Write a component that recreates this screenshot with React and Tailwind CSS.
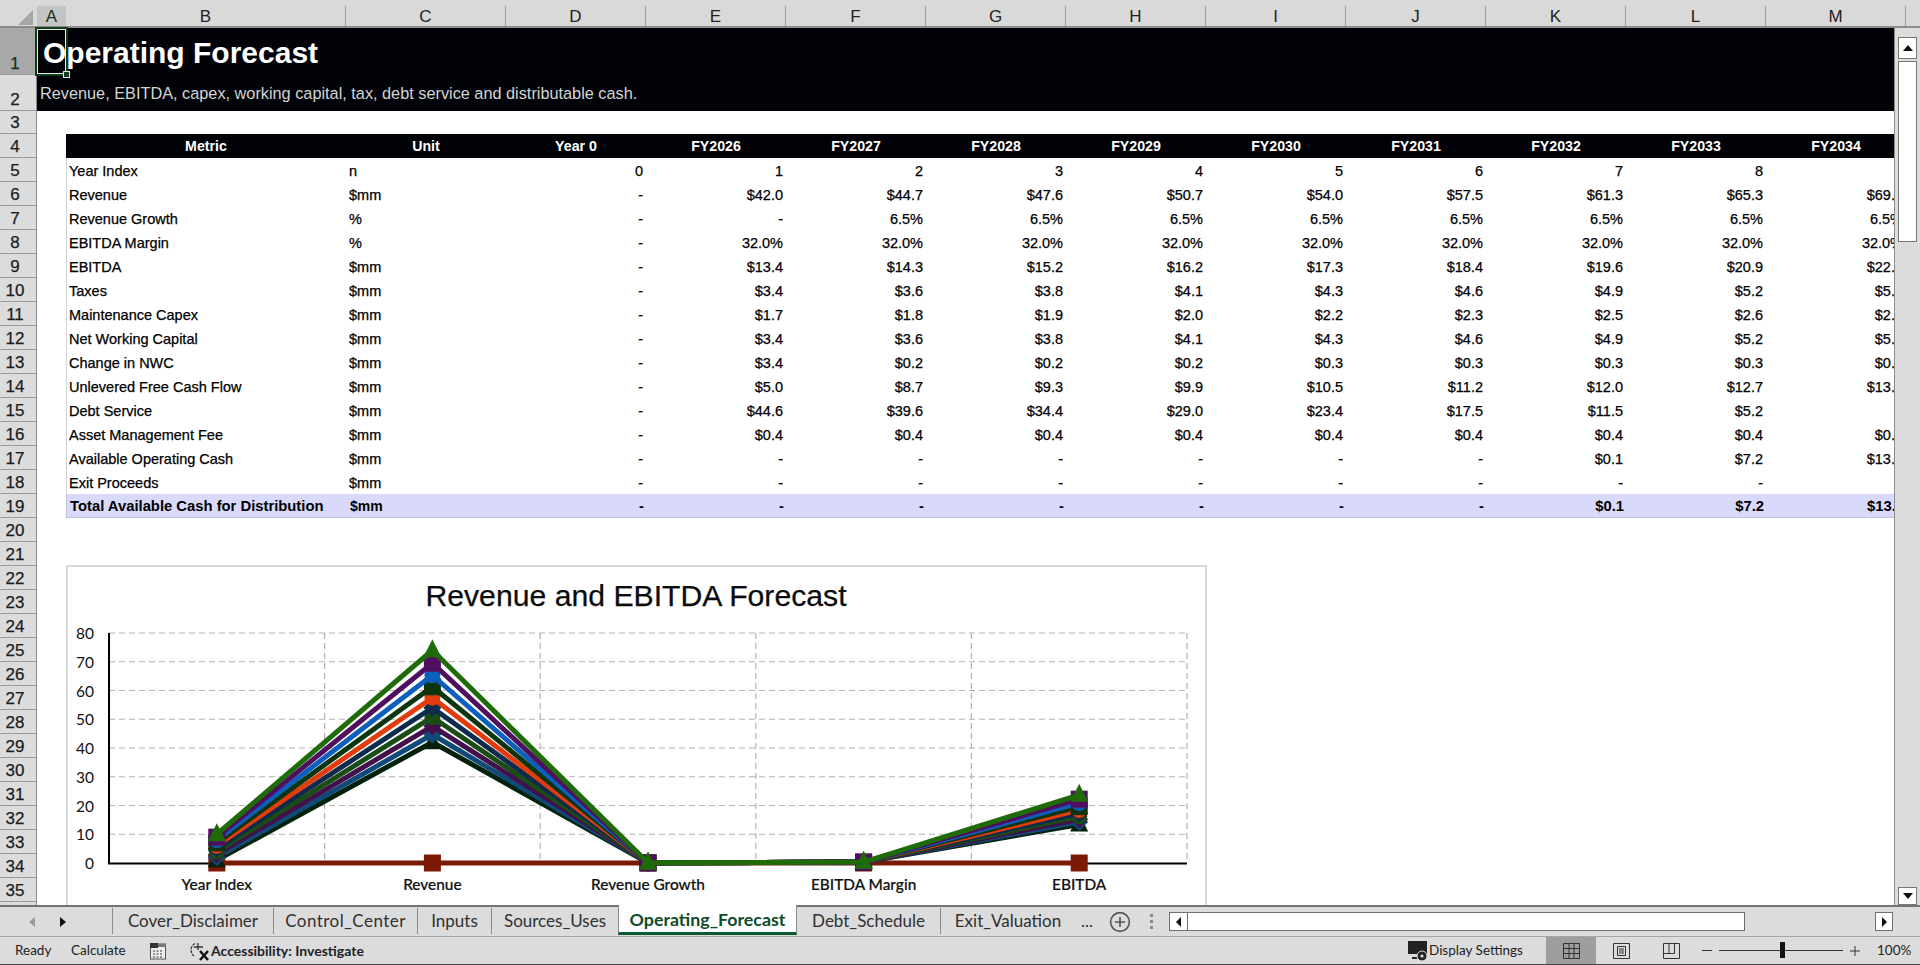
import { Fragment } from "react";

const cols = ["D", "E", "F", "G", "H", "I", "J", "K", "L", "M"];

const rows = [
  ["Year Index", "n", ["0", "1", "2", "3", "4", "5", "6", "7", "8", "9"]],
  ["Revenue", "$mm", ["-", "$42.0", "$44.7", "$47.6", "$50.7", "$54.0", "$57.5", "$61.3", "$65.3", "$69.5"]],
  ["Revenue Growth", "%", ["-", "-", "6.5%", "6.5%", "6.5%", "6.5%", "6.5%", "6.5%", "6.5%", "6.5%"]],
  ["EBITDA Margin", "%", ["-", "32.0%", "32.0%", "32.0%", "32.0%", "32.0%", "32.0%", "32.0%", "32.0%", "32.0%"]],
  ["EBITDA", "$mm", ["-", "$13.4", "$14.3", "$15.2", "$16.2", "$17.3", "$18.4", "$19.6", "$20.9", "$22.2"]],
  ["Taxes", "$mm", ["-", "$3.4", "$3.6", "$3.8", "$4.1", "$4.3", "$4.6", "$4.9", "$5.2", "$5.6"]],
  ["Maintenance Capex", "$mm", ["-", "$1.7", "$1.8", "$1.9", "$2.0", "$2.2", "$2.3", "$2.5", "$2.6", "$2.8"]],
  ["Net Working Capital", "$mm", ["-", "$3.4", "$3.6", "$3.8", "$4.1", "$4.3", "$4.6", "$4.9", "$5.2", "$5.6"]],
  ["Change in NWC", "$mm", ["-", "$3.4", "$0.2", "$0.2", "$0.2", "$0.3", "$0.3", "$0.3", "$0.3", "$0.3"]],
  ["Unlevered Free Cash Flow", "$mm", ["-", "$5.0", "$8.7", "$9.3", "$9.9", "$10.5", "$11.2", "$12.0", "$12.7", "$13.6"]],
  ["Debt Service", "$mm", ["-", "$44.6", "$39.6", "$34.4", "$29.0", "$23.4", "$17.5", "$11.5", "$5.2", ""]],
  ["Asset Management Fee", "$mm", ["-", "$0.4", "$0.4", "$0.4", "$0.4", "$0.4", "$0.4", "$0.4", "$0.4", "$0.4"]],
  ["Available Operating Cash", "$mm", ["-", "-", "-", "-", "-", "-", "-", "$0.1", "$7.2", "$13.2"]],
  ["Exit Proceeds", "$mm", ["-", "-", "-", "-", "-", "-", "-", "-", "-", ""]],
];

const years = ["Year 0", "FY2026", "FY2027", "FY2028", "FY2029", "FY2030", "FY2031", "FY2032", "FY2033", "FY2034"];
const totals = ["-", "-", "-", "-", "-", "-", "-", "$0.1", "$7.2", "$13.2"];

// chart uses page coordinates through the viewBox
const catX = [216.8, 432.4, 648, 863.6, 1079.2];
const yOf = (v) => 863 - v * 2.875;
const series = [
  { color: "#7a1a05", marker: "square", values: [0, 0, 0, 0, 0] },
  { color: "#04220b", marker: "triangle", values: [1, 42, 0.065, 0.32, 13.4] },
  { color: "#0f4a78", marker: "diamond", values: [2, 44.7, 0.065, 0.32, 14.3] },
  { color: "#42104a", marker: "diamond", values: [3, 47.6, 0.065, 0.32, 15.2] },
  { color: "#1a4d15", marker: "circle", values: [4, 50.7, 0.065, 0.32, 16.2] },
  { color: "#0e2a4c", marker: "diamond", values: [5, 54, 0.065, 0.32, 17.3] },
  { color: "#e23c0e", marker: "circle", values: [6, 57.5, 0.065, 0.32, 18.4] },
  { color: "#0c3510", marker: "square", values: [7, 61.3, 0.065, 0.32, 19.6] },
  { color: "#0d5fbd", marker: "circle", values: [8, 65.3, 0.065, 0.32, 20.9] },
  { color: "#4f0f5e", marker: "square", values: [9, 69.5, 0.065, 0.32, 22.2] },
  { color: "#1f6b0a", marker: "triangle", values: [10, 74, 0.065, 0.32, 23.7] },
];

function Marker({ kind, x, y, color }) {
  if (kind === "square") return <rect x={x - 8.5} y={y - 8.5} width="17" height="17" fill={color} />;
  if (kind === "circle") return <circle cx={x} cy={y} r="8" fill={color} />;
  if (kind === "diamond") return <path d={`M${x} ${y - 9}L${x + 9} ${y}L${x} ${y + 9}L${x - 9} ${y}Z`} fill={color} />;
  return <path d={`M${x} ${y - 11}L${x + 9} ${y + 7}L${x - 9} ${y + 7}Z`} fill={color} />;
}

function Chart() {
  const ticks = [80, 70, 60, 50, 40, 30, 20, 10, 0];
  const names = ["Year Index", "Revenue", "Revenue Growth", "EBITDA Margin", "EBITDA"];
  const gridX = [324.6, 540.2, 755.8, 971.4, 1187];
  return (
    <div className="ml-[29px] w-[1141px] h-[420px] border-2 border-[#d9d9d9] bg-white shrink-0">
      <svg viewBox="68 567 1137 416" width="1137" height="416" className="block">
        <text x="636" y="606" textAnchor="middle" fontFamily="'Liberation Sans', sans-serif" fontSize="30.2" fill="#0c0c0c" stroke="#0c0c0c" strokeWidth="0.25">
          Revenue and EBITDA Forecast
        </text>
        {ticks.slice(0, 8).map((t) => (
          <line key={t} x1="109" x2="1187" y1={yOf(t)} y2={yOf(t)} stroke="#b3b3b3" strokeWidth="1.2" strokeDasharray="6 4" />
        ))}
        {gridX.map((x) => (
          <line key={x} x1={x} x2={x} y1="633" y2="859" stroke="#b3b3b3" strokeWidth="1.2" strokeDasharray="6 4" />
        ))}
        <line x1="109" x2="109" y1="633" y2="864" stroke="#000" strokeWidth="2" />
        <line x1="108" x2="1187" y1="863.5" y2="863.5" stroke="#000" strokeWidth="2" />
        {series.map((s) => (
          <Fragment key={s.color}>
            <polyline
              points={s.values.map((v, i) => `${catX[i]},${yOf(v)}`).join(" ")}
              fill="none"
              stroke={s.color}
              strokeWidth="5"
              strokeLinejoin="round"
            />
            {s.values.map((v, i) => (
              <Marker key={i} kind={s.marker} x={catX[i]} y={yOf(v)} color={s.color} />
            ))}
          </Fragment>
        ))}
        {ticks.map((t) => (
          <text key={t} x="94" y={yOf(t) + 6} textAnchor="end" fontFamily="Lato, sans-serif" fontSize="15.5" fill="#111">
            {t}
          </text>
        ))}
        {names.map((n, i) => (
          <text key={n} x={catX[i]} y="890" textAnchor="middle" fontFamily="Lato, sans-serif" fontWeight="500" fontSize="15.4" fill="#111" stroke="#111" strokeWidth="0.2">
            {n}
          </text>
        ))}
      </svg>
    </div>
  );
}

function RowHeaders() {
  const heights = { 1: "h-[47px]", 2: "h-[36px]", 3: "h-[23px]" };
  const nums = Array.from({ length: 36 }, (_, i) => i + 1);
  return (
    <div className="w-[37px] shrink-0 bg-[#dcdcdc] border-r border-[#8c8c8c] overflow-hidden font-['Liberation_Sans',sans-serif] [-webkit-text-stroke:0.25px_currentColor]">
      {nums.map((n) => (
        <div
          key={n}
          className={`${heights[n] || "h-6"} flex items-end justify-center pr-[6px] text-[17px] leading-[20px] border-b border-[#9a9a9a] ${
            n === 1 ? "bg-[#a8a8a8] text-[#14301c]" : "text-[#1c1c1c]"
          }`}
        >
          {n}
        </div>
      ))}
    </div>
  );
}

function ColHeader() {
  return (
    <div className="flex h-[28px] shrink-0 bg-[#d9d9d9] text-[17px] text-[#222] border-b-2 border-[#8c8c8c] font-['Liberation_Sans',sans-serif]">
      <div className="w-[37px] shrink-0">
        <svg width="37" height="26" className="block">
          <path d="M33 10V25H18Z" fill="#a6a6a6" />
        </svg>
      </div>
      <div className="w-[29px] shrink-0 mt-[6px] pt-px bg-[#c4c4c4] flex items-center justify-center text-[#14301c]">A</div>
      <div className="w-[280px] shrink-0 mt-[6px] pt-px flex items-center justify-center border-r border-[#9a9a9a]">B</div>
      <div className="w-[160px] shrink-0 mt-[6px] pt-px flex items-center justify-center border-r border-[#9a9a9a]">C</div>
      {cols.map((c) => (
        <div key={c} className="w-[140px] shrink-0 mt-[6px] pt-px flex items-center justify-center border-r border-[#9a9a9a]">
          {c}
        </div>
      ))}
    </div>
  );
}

function Sheet() {
  return (
    <div className="w-[1857px] shrink-0 overflow-hidden bg-white font-['Liberation_Sans',sans-serif] text-[14.5px] text-black">
      <div className="h-[47px] w-[1900px] bg-[#000207] pl-[6px] pt-[2px] flex items-center text-[30px] font-bold text-white whitespace-nowrap">
        Operating Forecast
      </div>
      <div className="h-[36px] w-[1900px] bg-[#000207] pl-[3px] flex items-center text-[16.3px] text-[#d4d4d4] whitespace-nowrap">
        Revenue, EBITDA, capex, working capital, tax, debt service and distributable cash.
      </div>
      <div className="h-[23px]" />

      <div className="flex h-6 w-[1900px] items-center whitespace-nowrap">
        <div className="w-[29px] shrink-0 self-stretch bg-white" />
        <div className="flex flex-1 self-stretch items-center pt-[2px] bg-[#000207] font-bold text-white text-[14.2px]">
          <div className="w-[280px] shrink-0 text-center">Metric</div>
          <div className="w-[160px] shrink-0 text-center">Unit</div>
          {years.map((y) => (
            <div key={y} className="w-[140px] shrink-0 text-center">
              {y}
            </div>
          ))}
        </div>
      </div>

      {rows.map(([name, unit, vals]) => (
        <div key={name} className="flex h-6 w-[1900px] whitespace-nowrap [-webkit-text-stroke:0.25px_currentColor]">
          <div className="w-[29px] shrink-0" />
          <div className="w-[280px] shrink-0 flex items-center pt-[3px] border-l border-[#d4d4d4] pl-[2px]">{name}</div>
          <div className="w-[160px] shrink-0 flex items-center pt-[3px] pl-[3px]">{unit}</div>
          {vals.map((v, i) => (
            <div key={i} className="w-[140px] shrink-0 flex items-center justify-end pt-[3px] pr-[3px]">
              {v}
            </div>
          ))}
        </div>
      ))}

      <div className="flex h-6 w-[1900px] items-center whitespace-nowrap font-bold text-[14.8px]">
        <div className="w-[29px] shrink-0" />
        <div className="flex flex-1 self-stretch items-center pt-px bg-[#d9d9fb] border-l border-b border-[#c4c4d8]">
          <div className="w-[280px] shrink-0 pl-[3px]">Total Available Cash for Distribution</div>
          <div className="w-[160px] shrink-0 pl-[3px] text-[14px]">$mm</div>
          {totals.map((v, i) => (
            <div key={i} className="w-[140px] shrink-0 text-right pr-[3px]">
              {v}
            </div>
          ))}
        </div>
      </div>

      <div className="h-[47px]" />
      <Chart />
    </div>
  );
}

function VScroll() {
  return (
    <div className="flex-1 bg-[#dcdcdc] border-l border-[#8c8c8c] flex flex-col items-center pt-[9px]">
      <div className="w-[19px] h-[22px] bg-white border border-[#777] flex items-center justify-center">
        <svg width="10" height="6"><path d="M5 0L10 6H0Z" fill="#111" /></svg>
      </div>
      <div className="w-[19px] h-[181px] mt-[2px] bg-white border border-[#777]" />
      <div className="mt-auto w-[19px] h-[18px] bg-white border border-[#777] flex items-center justify-center">
        <svg width="10" height="6"><path d="M5 6L10 0H0Z" fill="#111" /></svg>
      </div>
    </div>
  );
}

const tabs = [
  ["Cover_Disclaimer", "w-[161px]"],
  ["Control_Center", "w-[144px] tracking-[0.45px]"],
  ["Inputs", "w-[74px]"],
  ["Sources_Uses", "w-[127px]"],
];

function TabBar() {
  return (
    <div className="flex h-[32px] shrink-0 items-stretch bg-[#dcdcdc] border-t-2 border-[#727272] border-b border-b-[#a5a5a5] font-['Lato',sans-serif] text-[17px] text-[#303030] whitespace-nowrap">
      <div className="w-[112px] shrink-0 flex items-center pl-[29px] gap-[23px]">
        <svg width="7" height="10"><path d="M6 0V10L0 5Z" fill="#9a9a9a" /></svg>
        <svg width="7" height="10"><path d="M1 0V10L7 5Z" fill="#111" /></svg>
      </div>
      {tabs.map(([name, w]) => (
        <div key={name} className={`${w} shrink-0 flex items-center justify-center h-[26px] mt-px border-l border-[#8a8a8a]`}>
          {name}
        </div>
      ))}
      <div className="w-[179px] shrink-0 -mt-[2px] bg-white h-[30px] flex items-center justify-center pt-[2px] font-bold text-[17.8px] text-[#0d4b2a] border-b-[3px] border-[#0d5a30] border-x border-x-[#8a8a8a]">
        Operating_Forecast
      </div>
      <div className="w-[143px] shrink-0 flex items-center justify-center h-[26px] mt-px">Debt_Schedule</div>
      <div className="w-[135px] shrink-0 flex items-center justify-center h-[26px] mt-px border-l border-[#8a8a8a]">Exit_Valuation</div>
      <div className="w-[31px] shrink-0 flex items-center text-[#333] pl-[6px] pb-[2px]">...</div>
      <div className="w-[28px] shrink-0 flex items-center justify-center">
        <svg width="22" height="22" viewBox="0 0 22 22" fill="none" stroke="#555" strokeWidth="1.6">
          <circle cx="11" cy="11" r="9.4" />
          <path d="M11 6V16M6 11H16" />
        </svg>
      </div>
      <div className="w-[35px] shrink-0 flex flex-col items-center justify-center gap-[3px]">
        <span className="w-[3px] h-[3px] bg-[#8a8a8a]" />
        <span className="w-[3px] h-[3px] bg-[#8a8a8a]" />
        <span className="w-[3px] h-[3px] bg-[#8a8a8a]" />
      </div>
      <div className="w-[576px] shrink-0 flex items-center">
        <div className="flex w-full h-[19px] bg-white border border-[#6f6f6f]">
          <div className="w-[18px] flex items-center justify-center border-r border-[#6f6f6f]">
            <svg width="6" height="10"><path d="M5 0V10L0 5Z" fill="#111" /></svg>
          </div>
        </div>
      </div>
      <div className="w-[148px] shrink-0 flex items-center justify-end">
        <div className="w-[18px] h-[19px] bg-white border border-[#6f6f6f] flex items-center justify-center">
          <svg width="6" height="10"><path d="M1 0V10L6 5Z" fill="#111" /></svg>
        </div>
      </div>
    </div>
  );
}

function StatusBar() {
  return (
    <div className="flex h-[28px] shrink-0 items-center bg-[#dcdcdc] border-b border-[#444] font-['Lato',sans-serif] text-[13.5px] text-[#222] whitespace-nowrap">
      <span className="ml-[15px] w-[56px]">Ready</span>
      <span className="w-[79px]">Calculate</span>
      <svg width="16" height="18" viewBox="0 0 16 18" className="shrink-0">
        <rect x="0.5" y="2" width="15" height="15" fill="#eee" stroke="#555" />
        <rect x="0" y="1" width="8" height="5" fill="#333" />
        <rect x="8" y="2" width="8" height="3" fill="#777" />
        <path d="M3 9H13M3 12H13M3 15H13" stroke="#333" strokeDasharray="2 1.5" />
      </svg>
      <svg width="22" height="20" viewBox="0 0 22 20" fill="none" stroke="#333" strokeWidth="1.3" className="ml-[22px] shrink-0">
        <path d="M7 2.5A7.5 7.5 0 0 0 6 15" strokeDasharray="3 1" />
        <path d="M10 2V9M6 6H15" />
        <path d="M12 10L20 19M20 10L12 19" strokeWidth="2.4" stroke="#111" />
      </svg>
      <span className="ml-[1px] font-bold text-[14px]">Accessibility: Investigate</span>

      <div className="ml-auto w-[512px] shrink-0 flex items-center self-stretch">
        <svg width="21" height="22" viewBox="0 0 21 22" className="shrink-0">
          <path d="M0 1H19V14H0Z" fill="#222" />
          <path d="M4 17H9V19H4Z" fill="#222" />
          <circle cx="14" cy="16" r="5" fill="#222" stroke="#dcdcdc" />
          <circle cx="14" cy="16" r="1.6" fill="#dcdcdc" />
        </svg>
        <span className="w-[117px]">Display Settings</span>
        <div className="w-[50px] self-stretch bg-[#9e9e9e] flex items-center justify-center shrink-0">
          <svg width="17" height="16" viewBox="0 0 17 16" fill="none" stroke="#333">
            <path d="M.5.5H16.5V15.5H.5ZM.5 5.5H16.5M.5 10.5H16.5M6 .5V15.5M11 .5V15.5" />
          </svg>
        </div>
        <div className="w-[50px] flex justify-center shrink-0">
          <svg width="17" height="16" viewBox="0 0 17 16" fill="none" stroke="#333">
            <path d="M.5.5H16.5V15.5H.5ZM4.5 3.5H12.5V12.5H4.5ZM6 6H11M6 8H11M6 10H11" />
          </svg>
        </div>
        <div className="w-[50px] flex justify-center shrink-0">
          <svg width="17" height="16" viewBox="0 0 17 16" fill="none" stroke="#333">
            <path d="M.5.5H16.5V15.5H.5ZM.5 10.5H11.5V.5M6 .5V10.5" />
          </svg>
        </div>
        <div className="w-[10px] h-px bg-[#333] ml-[6px] shrink-0" />
        <div className="relative w-[124px] h-px bg-[#333] ml-[7px] shrink-0">
          <div className="absolute left-[61px] -top-[8px] w-[5px] h-[16px] bg-[#111]" />
        </div>
        <svg width="10" height="10" viewBox="0 0 10 10" className="ml-[7px] shrink-0" stroke="#333">
          <path d="M5 0V10M0 5H10" />
        </svg>
        <span className="ml-[17px]">100%</span>
      </div>
    </div>
  );
}

export default function App() {
  return (
    <div className="relative flex flex-col w-[1920px] h-[965px] overflow-hidden bg-[#d9d9d9]">
      <ColHeader />
      <div className="flex flex-1 min-h-0 overflow-hidden">
        <RowHeaders />
        <Sheet />
        <VScroll />
      </div>
      <TabBar />
      <StatusBar />

      {/* active cell A1 */}
      <div className="absolute left-[35px] top-[27px] w-[33px] h-[49px] border-2 border-[#0f3d1c]">
        <div className="h-full w-full border border-[#e8e8e8]" />
      </div>
      <div className="absolute left-[63px] top-[71px] w-[7px] h-[7px] bg-[#0f3d1c] border border-[#e8e8e8]" />
    </div>
  );
}
